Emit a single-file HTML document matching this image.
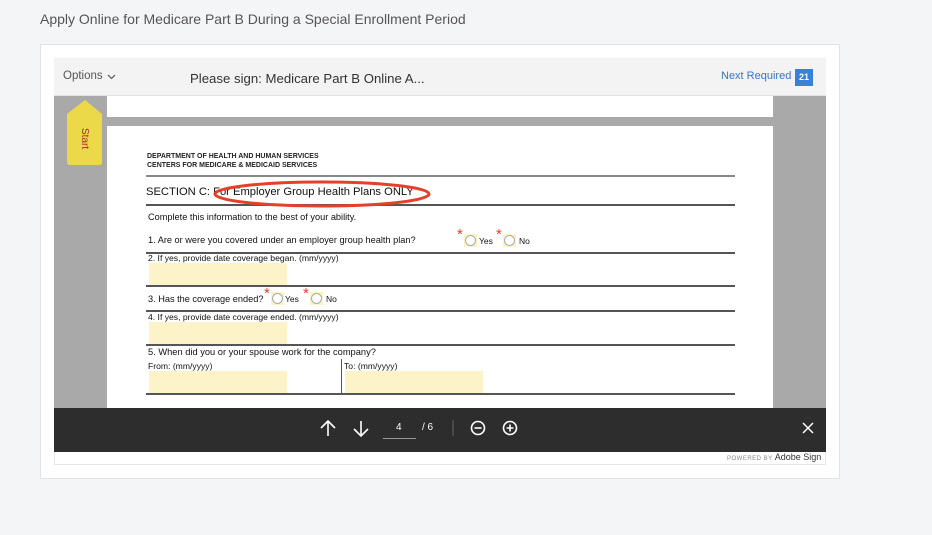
<!DOCTYPE html>
<html><head><style>
*{margin:0;padding:0;box-sizing:border-box}
body{width:932px;height:535px;background:#f4f5f7;font-family:"Liberation Sans",sans-serif;position:relative;overflow:hidden}
.a{position:absolute}
.t{position:absolute;white-space:nowrap;color:#111;font-size:9px;z-index:3}
.rule{position:absolute;left:146px;width:589px;height:1.5px;background:#555}
.y{position:absolute;background:#fdf3c8;z-index:1}
.r{position:absolute;width:11px;height:11px;border:1px solid #aaa;border-radius:50%;background:#fff;z-index:2}
.rb{position:absolute;width:13px;height:13px;background:#fdf3c8;z-index:1}
.s{position:absolute;color:#e8402a;font-size:15px;line-height:12px;z-index:3}
</style></head><body>
<div class="t" style="left:40px;top:11px;font-size:14px;color:#555">Apply Online for Medicare Part B During a Special Enrollment Period</div>
<div class="a" style="left:40px;top:44px;width:800px;height:435px;background:#fff;border:1px solid #e2e3e6"></div>
<div class="a" style="left:54px;top:58px;width:772px;height:407px;border:1px solid #e6e6e6;background:#fff"></div>
<div class="a" style="left:54px;top:58px;width:772px;height:38px;background:#f3f3f3;border-bottom:1px solid #e3e3e3"></div>
<div class="t" style="left:63px;top:70px;font-size:11.5px;color:#555">Options</div>
<svg class="a" style="left:107px;top:74px" width="9" height="6" fill="none" stroke="#666" stroke-width="1.3"><path d="M1 1 L4.5 4.5 L8 1"/></svg>
<div class="t" style="left:190px;top:71px;font-size:13.2px;color:#333">Please sign: Medicare Part B Online A...</div>
<div class="t" style="left:721px;top:70px;font-size:11px;color:#3b73c9">Next Required</div>
<div class="a" style="left:795px;top:69px;width:18px;height:17px;background:#3781d6;color:#fff;font-size:9px;font-weight:bold;text-align:center;line-height:17px">21</div>
<div class="a" style="left:54px;top:96px;width:772px;height:312px;background:#a9a9a9"></div>
<div class="a" style="left:107px;top:96px;width:666px;height:21px;background:#fff"></div>
<div class="a" style="left:107px;top:126px;width:666px;height:282px;background:#fff"></div>
<svg class="a" style="left:67px;top:99px" width="36" height="67"><path d="M0 15 L18 1 L35 15 L35 63 Q35 66 32 66 L3 66 Q0 66 0 63Z" fill="#ecd94a"/></svg>
<div class="t" style="top:128px;font-size:10px;color:#b0282a;transform:rotate(90deg);transform-origin:left top;left:90px">Start</div>
<div class="t" style="left:147px;top:153px;font-size:7px;font-weight:bold;color:#222">DEPARTMENT OF HEALTH AND HUMAN SERVICES</div>
<div class="t" style="left:147px;top:162px;font-size:7px;font-weight:bold;color:#222">CENTERS FOR MEDICARE &amp; MEDICAID SERVICES</div>
<div class="rule" style="top:175px;height:2px;background:#888"></div>
<div class="t" style="left:146px;top:186px;font-size:11.2px">SECTION C: For Employer Group Health Plans ONLY</div>
<svg class="a" style="left:210px;top:178px;z-index:4" width="225" height="32"><ellipse cx="112" cy="16" rx="107" ry="12" fill="none" stroke="#e4402a" stroke-width="3"/></svg>
<div class="rule" style="top:204px"></div>
<div class="t" style="left:148px;top:212px;font-size:9.2px">Complete this information to the best of your ability.</div>
<div class="t" style="left:148px;top:235px;font-size:9.2px">1. Are or were you covered under an employer group health plan?</div>
<div class="rb" style="left:464px;top:234px"></div><div class="r" style="left:465px;top:235px"></div><div class="s" style="left:457px;top:229px">*</div><div class="t" style="left:479px;top:236px;font-size:8.5px">Yes</div>
<div class="rb" style="left:503px;top:234px"></div><div class="r" style="left:504px;top:235px"></div><div class="s" style="left:496px;top:229px">*</div><div class="t" style="left:519px;top:236px;font-size:8.5px">No</div>
<div class="rule" style="top:252px"></div>
<div class="t" style="left:148px;top:253px;font-size:8.6px">2. If yes, provide date coverage began. (mm/yyyy)</div>
<div class="y" style="left:149px;top:263px;width:138px;height:22px"></div>
<div class="rule" style="top:285px"></div>
<div class="t" style="left:148px;top:294px;font-size:9.2px">3. Has the coverage ended?</div>
<div class="rb" style="left:271px;top:292px"></div><div class="r" style="left:272px;top:293px"></div><div class="s" style="left:264px;top:288px">*</div><div class="t" style="left:285px;top:294px;font-size:8.5px">Yes</div>
<div class="rb" style="left:310px;top:292px"></div><div class="r" style="left:311px;top:293px"></div><div class="s" style="left:303px;top:288px">*</div><div class="t" style="left:326px;top:294px;font-size:8.5px">No</div>
<div class="rule" style="top:310px"></div>
<div class="t" style="left:148px;top:312px;font-size:8.6px">4. If yes, provide date coverage ended. (mm/yyyy)</div>
<div class="y" style="left:149px;top:322px;width:138px;height:22px"></div>
<div class="rule" style="top:344px"></div>
<div class="t" style="left:148px;top:347px;font-size:9.3px">5. When did you or your spouse work for the company?</div>
<div class="t" style="left:148px;top:361px;font-size:8.6px">From: (mm/yyyy)</div>
<div class="t" style="left:344px;top:361px;font-size:8.6px">To: (mm/yyyy)</div>
<div class="a" style="left:341px;top:359px;width:1px;height:35px;background:#555"></div>
<div class="y" style="left:149px;top:371px;width:138px;height:22px"></div>
<div class="y" style="left:345px;top:371px;width:138px;height:22px"></div>
<div class="rule" style="top:393px"></div>
<div class="a" style="left:54px;top:408px;width:772px;height:44px;background:#2d2d2d;z-index:5"></div>
<svg class="a" style="left:318px;top:418px;z-index:6" width="210" height="22" fill="none" stroke="#fff" stroke-width="1.6">
<path d="M10 3 V18 M3 10 L10 3 L17 10"/>
<path d="M43 3 V18 M36 11 L43 18 L50 11"/>
<circle cx="160" cy="10" r="6.5"/><path d="M156.5 10 H163.5"/>
<circle cx="192" cy="10" r="6.5"/><path d="M188.5 10 H195.5 M192 6.5 V13.5"/>
<path d="M135 2 V18" stroke="#666" stroke-width="1"/>
</svg>
<div class="t" style="left:396px;top:422px;font-size:10px;color:#fff;z-index:6">4</div>
<div class="a" style="left:383px;top:438px;width:33px;height:1px;background:#999;z-index:6"></div>
<div class="t" style="left:422px;top:422px;font-size:10px;color:#fff;z-index:6">/ 6</div>
<svg class="a" style="left:802px;top:422px;z-index:6" width="12" height="12" stroke="#fff" stroke-width="1.5"><path d="M1 1 L11 11 M11 1 L1 11"/></svg>
<div class="t" style="left:727px;top:452px;font-size:6px;color:#888;letter-spacing:.5px">POWERED BY <span style="font-size:9px;color:#333;letter-spacing:0">Adobe Sign</span></div>
</body></html>
